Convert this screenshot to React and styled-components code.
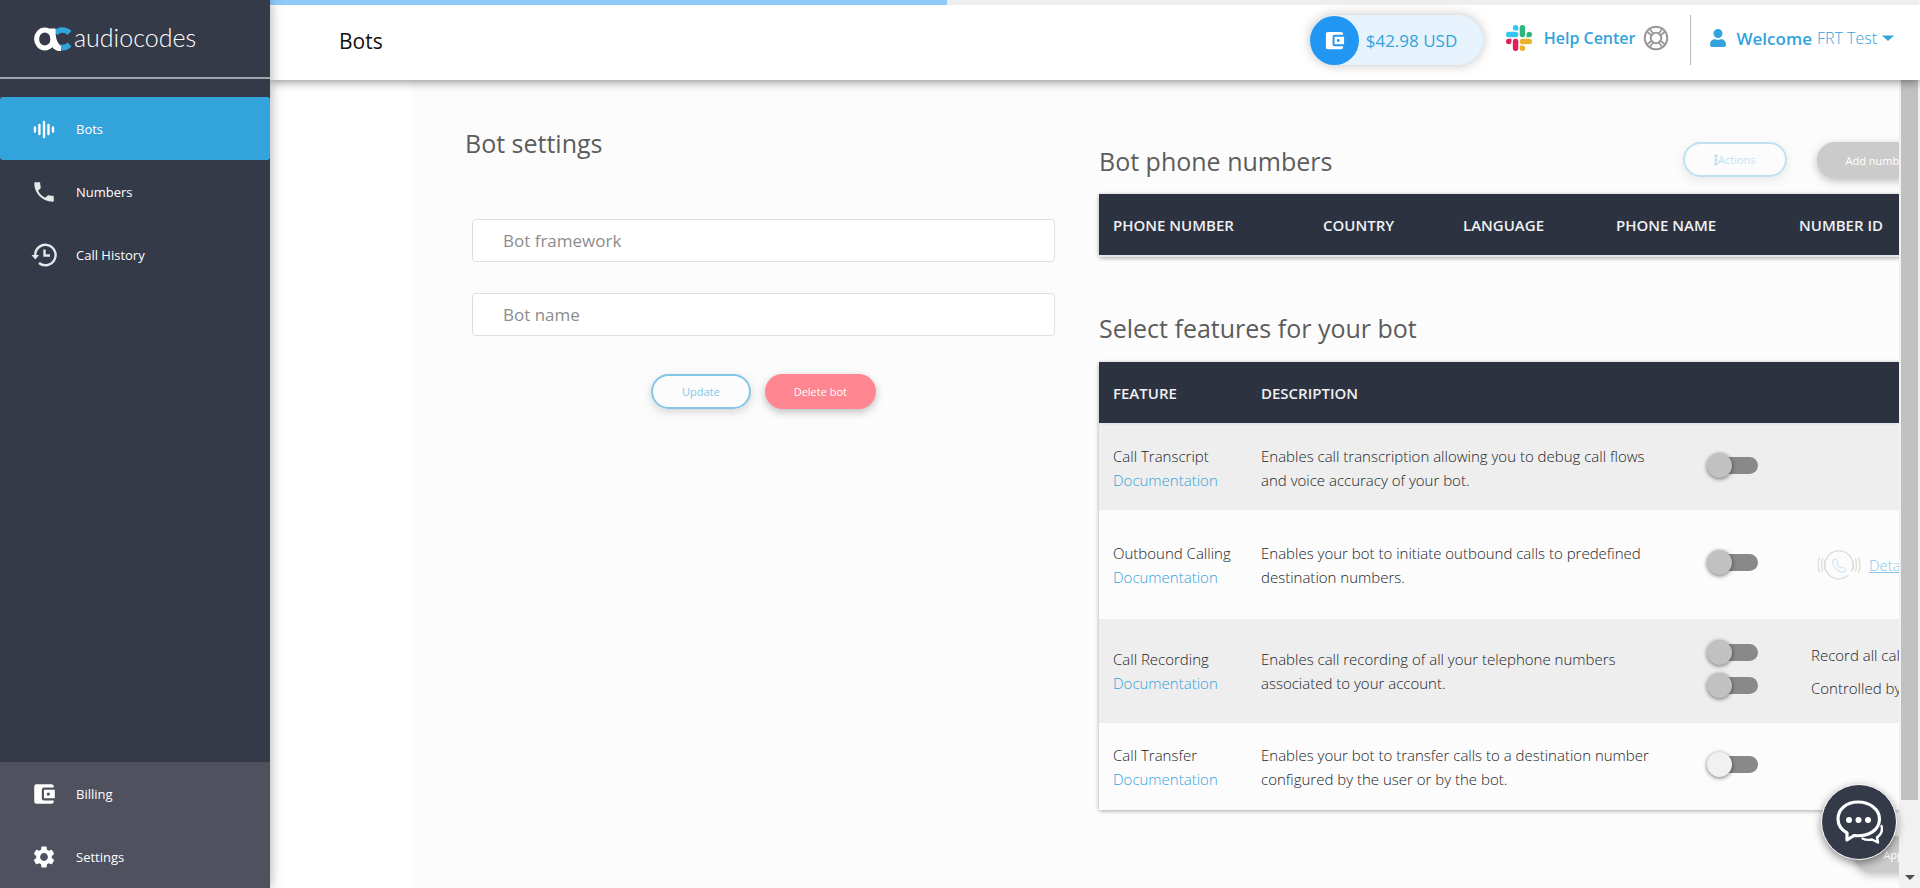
import React from "react";
import styled, { createGlobalStyle, css } from "styled-components";
import { MdAccountBalanceWallet, MdPhone, MdSettings } from "react-icons/md";
import { FaUser } from "react-icons/fa";

const GlobalStyle = createGlobalStyle`
  * { box-sizing: border-box; }
  body {
    margin: 0;
    overflow: hidden;
    font-family: "Open Sans", "Noto Sans", sans-serif;
    color: #212529;
    background: #fff;
  }
  a { text-decoration: none; }
  h1, h2 { margin: 0; }
  button, input { font-family: inherit; }
`;

const Shell = styled.div`
  display: flex;
  height: 100vh;
`;

/* Sidebar */

const Sidebar = styled.aside`
  display: flex;
  flex-direction: column;
  flex: 0 0 270px;
  background: #353a48;
  box-shadow: 0 0 12px rgba(0, 0, 0, 0.35);
  z-index: 3;
`;

const Brand = styled.a`
  display: flex;
  align-items: center;
  gap: 2px;
  height: 79px;
  padding-left: 34px;
  color: #fff;
  border-bottom: 2px solid #a3a5ad;
`;

const BrandName = styled.span`
  font-family: Lato, sans-serif;
  font-weight: 300;
  font-size: 25px;
  line-height: 30px;
  padding-bottom: 4px;
`;

const Nav = styled.nav`
  display: flex;
  flex-direction: column;
  padding-top: 18px;
`;

const BottomNav = styled(Nav)`
  margin-top: auto;
  padding-top: 0;
  background: #4f525e;
`;

const NavItem = styled.a`
  display: flex;
  align-items: center;
  gap: 19px;
  height: 63px;
  padding-left: 31px;
  border-radius: 3px;
  font-size: 13px;
  color: #fff;
  background: ${(p) => (p.$active ? "#33a3dc" : "transparent")};

  svg {
    width: 26px;
    height: 26px;
    opacity: ${(p) => (p.$dim ? 0.88 : 1)};
  }
`;

/* Header */

const Page = styled.div`
  display: flex;
  flex-direction: column;
  flex: 1;
  min-width: 0;
`;

const Header = styled.header`
  flex: none;
  background: #fff;
  box-shadow: 0 1px 10px rgba(0, 0, 0, 0.5);
  z-index: 2;
`;

const Progress = styled.div`
  height: 5px;
  background: #eee;
  border-radius: 0 3px 3px 0;

  &::before {
    content: "";
    display: block;
    width: 41%;
    height: 5px;
    background: #90caf9;
  }
`;

const HeaderRow = styled.div`
  display: flex;
  align-items: center;
  height: 75px;
  padding: 0 26px 9px 69px;
`;

const PageTitle = styled.h1`
  flex: 1;
  padding-top: 5px;
  font-size: 21px;
  font-weight: 400;
  color: #111;
`;

const Balance = styled.a`
  display: flex;
  align-items: center;
  gap: 7px;
  width: 173px;
  height: 50px;
  margin-right: 23px;
  margin-top: 4px;
  border-radius: 25px;
  font-size: 17px;
  color: #33a3dc;
  background: #e6f3fd;
  box-shadow: 0 0 12px rgba(0, 0, 0, 0.25);
`;

const BalanceIcon = styled.span`
  display: flex;
  align-items: center;
  justify-content: center;
  width: 49px;
  height: 49px;
  border-radius: 50%;
  color: #fff;
  background: #2196f3;
`;

const HeaderLink = styled.a`
  display: flex;
  align-items: center;
  gap: ${(p) => p.$gap}px;
  font-size: 16px;
  color: #33a3dc;

  strong {
    padding-left: 4px;
    font-size: ${(p) => p.$strongSize}px;
    font-weight: 600;
  }
  span { font-weight: 300; }
`;

const HeaderRule = styled.div`
  width: 1px;
  height: 50px;
  margin: 4px 18px 0 21px;
  background: #bbb;
`;

/* Workspace */

const Body = styled.div`
  display: flex;
  flex: 1;
  min-height: 0;
`;

const Workspace = styled.main`
  display: grid;
  grid-template-columns: minmax(0, 59fr) minmax(0, 80fr);
  column-gap: 44px;
  flex: 1;
  min-width: 0;
  margin-left: 141px;
  padding-left: 54px;
  overflow: hidden;
  background: #fcfcfc;
`;

const ScrollTrack = styled.div`
  display: flex;
  flex-direction: column;
  justify-content: space-between;
  align-items: center;
  flex: 0 0 21px;
  padding-bottom: 8px;
  background: #f1f1f1;

  &::before {
    content: "";
    width: 17px;
    height: 90%;
    background: #c1c1c1;
  }
  &::after {
    content: "";
    border: 5px solid transparent;
    border-top-color: #505050;
    border-bottom: 0;
  }
`;

const SectionTitle = styled.h2`
  font-size: 25px;
  line-height: 34px;
  font-weight: 400;
  color: #5c5c5c;
`;

const SettingsForm = styled.form`
  padding-top: 46px;
`;

const Fields = styled.div`
  display: flex;
  flex-direction: column;
  gap: 31px;
  padding: 59px 0 38px 7px;
`;

const TextField = styled.input`
  width: 100%;
  height: 43px;
  padding: 0 30px;
  border: 1px solid #dedede;
  border-radius: 4px;
  font-size: 17px;
  color: #444;
  background: #fff;

  &::placeholder { color: #8c8c8c; opacity: 1; }
`;

const ButtonRow = styled.div`
  display: flex;
  justify-content: center;
  gap: 14px;
  padding-left: 7px;
`;

const outline = css`
  border: 2px solid #33a3dc;
  color: #33a3dc;
  background: transparent;
`;

const Button = styled.button`
  display: inline-flex;
  align-items: center;
  flex: none;
  height: ${(p) => p.$height || 35}px;
  padding: 0 29px;
  border: 0;
  border-radius: 19px;
  font-size: 11px;
  color: #fff;
  background: ${(p) => p.$fill};
  opacity: ${(p) => p.$opacity || 1};
  box-shadow: 0 3px 8px rgba(0, 0, 0, 0.25);
  ${(p) => p.$outline && outline}
`;

const BotDetails = styled.div`
  padding-top: 62px;
`;

const TitleRow = styled.div`
  display: flex;
  align-items: flex-start;
  gap: 30px;
  width: 880px;
  padding-bottom: 16px;

  h2 { flex: 0 0 554px; padding-top: 2px; }
`;

const Table = styled.table`
  width: 900px;
  table-layout: fixed;
  border-spacing: 0;
  border-radius: 3px;
  box-shadow: 0 1px 4px rgba(0, 0, 0, 0.35);
  font-size: 15px;
  text-align: left;
`;

const HeadCell = styled.th`
  width: ${(p) => (p.$width ? `${p.$width}px` : "auto")};
  height: 63px;
  padding: 0 0 0 14px;
  border-bottom: 2px solid #e4e7ec;
  font-weight: 600;
  color: #eef0f3;
  background: #2d3240;
`;

const FeatureRow = styled.tr`
  height: ${(p) => p.$height}px;
  background: ${(p) => (p.$shaded ? "#eee" : "#fcfcfc")};

  & + & td { border-top: 1px solid #dfe1e3; }
`;

const Cell = styled.td`
  padding: 0 ${(p) => (p.$text ? 36 : 0)}px ${(p) => (p.$raised ? 4 : 0)}px 14px;
  font-weight: 300;
  line-height: 24px;
  white-space: ${(p) => (p.$nowrap ? "nowrap" : "normal")};
`;

const DocLink = styled.a`
  display: block;
  color: #33a3dc;
`;

const Stack = styled.div`
  display: flex;
  flex-direction: column;
  gap: ${(p) => p.$gap}px;
`;

const Switch = styled.input`
  appearance: none;
  display: flex;
  align-items: center;
  width: 48px;
  height: 17px;
  margin: 0 0 0 3px;
  border-radius: 9px;
  background: #898989;

  &::before {
    content: "";
    flex: none;
    width: 25px;
    height: 25px;
    margin-left: -3px;
    border-radius: 50%;
    background: ${(p) => (p.disabled ? "#c1c1c1" : "#f1f1f1")};
    box-shadow: 0 1px 4px rgba(0, 0, 0, 0.55);
  }
`;

const Details = styled.div`
  display: flex;
  align-items: center;
  gap: 8px;
  padding-left: 6px;

  a { color: #33a3dc; opacity: 0.6; text-decoration: underline; }
`;

const FeaturesTitle = styled(SectionTitle)`
  padding: 54px 0 17px;
`;

const ApplyRow = styled.div`
  display: flex;
  justify-content: flex-end;
  width: 842px;
  padding-top: 26px;
`;

const ChatButton = styled.button`
  position: fixed;
  right: 23px;
  bottom: 28px;
  z-index: 4;
  display: flex;
  align-items: center;
  justify-content: center;
  width: 76px;
  height: 76px;
  padding: 0;
  border: 1px solid #fff;
  border-radius: 50%;
  background: #353a48;
  box-shadow: 0 3px 8px rgba(0, 0, 0, 0.45);
`;

/* Drawings */

const BrandMark = () => (
  <svg width="38" height="24" viewBox="0 0 38 24" fill="none" aria-hidden="true">
    <path d="M21.500 6.500C24 2.500 31 1.500 35.500 6" stroke="#33a3dc" strokeWidth="5.500" />
    <path d="M25.500 20Q31 22 35.500 17.500" stroke="#33a3dc" strokeWidth="5.500" />
    <ellipse cx="10.800" cy="12" rx="8.200" ry="9" stroke="#fff" strokeWidth="5" />
    <path d="M16 1.500h5.500c0 9 1 14 5.500 17.500v5c-5 0-8-2-10-6z" fill="#fff" />
  </svg>
);

const WaveIcon = () => (
  <svg viewBox="0 0 26 26" stroke="#fff" strokeWidth="2.400" strokeLinecap="round" aria-hidden="true">
    <path d="M4 11.500v4M8.400 9v9M13 6v15M17.500 9v9M22 11.500v4" />
  </svg>
);

const HistoryIcon = () => (
  <svg viewBox="0 0 26 26" fill="none" stroke="#fff" strokeWidth="2.400" aria-hidden="true">
    <path d="M4.200 13A10.200 10.200 0 1 1 8 21" />
    <path d="M0.500 13h7.500l-3.700 4.500z" fill="#fff" stroke="none" />
    <path d="M13.500 7.500v6h5.500" />
  </svg>
);

const SlackIcon = () => (
  <svg width="26" height="26" viewBox="0 0 122.800 122.800" aria-hidden="true">
    <path d="M25.800 77.600a12.900 12.900 0 1 1-12.900-12.900h12.900zM32.300 77.600a12.900 12.900 0 0 1 25.800 0v32.300a12.900 12.900 0 0 1-25.800 0z" fill="#e01e5a" />
    <path d="M45.200 25.800a12.900 12.900 0 1 1 12.900-12.900v12.900zM45.200 32.300a12.900 12.900 0 0 1 0 25.800H12.900a12.900 12.900 0 0 1 0-25.800z" fill="#36c5f0" />
    <path d="M97 45.200a12.900 12.900 0 1 1 12.900 12.900H97zM90.500 45.200a12.900 12.900 0 0 1-25.800 0V12.900a12.900 12.900 0 0 1 25.800 0z" fill="#2eb67d" />
    <path d="M77.600 97a12.900 12.900 0 1 1-12.900 12.900V97zM77.600 90.500a12.900 12.900 0 0 1 0-25.800h32.300a12.900 12.900 0 0 1 0 25.800z" fill="#ecb22e" />
  </svg>
);

const LifeRingIcon = () => (
  <svg width="26" height="26" viewBox="0 0 26 26" fill="none" stroke="#999" strokeWidth="2" aria-hidden="true">
    <circle cx="13" cy="13" r="11.300" />
    <circle cx="13" cy="13" r="5.200" />
    <path d="M3.800 6.500l5 4M6.500 3.800l4 5M22.200 6.500l-5 4M19.500 3.800l-4 5M3.800 19.500l5-4M6.500 22.200l4-5M22.200 19.500l-5-4M19.500 22.200l-4-5" strokeWidth="1.800" />
  </svg>
);

const CaretIcon = () => (
  <svg width="12" height="7" viewBox="0 0 12 7" aria-hidden="true">
    <path d="M0 0.500h12l-6 5.500z" fill="#33a3dc" />
  </svg>
);

const DotsIcon = () => (
  <svg width="4" height="12" viewBox="0 0 4 12" fill="#33a3dc" aria-hidden="true">
    <circle cx="2" cy="2" r="1.700" />
    <circle cx="2" cy="6" r="1.700" />
    <circle cx="2" cy="10" r="1.700" />
  </svg>
);

const RingingIcon = () => (
  <svg width="44" height="30" viewBox="0 0 44 30" fill="none" stroke="#ddd" strokeWidth="1.400" strokeLinecap="round" aria-hidden="true">
    <path d="M31 25.500A14 14 0 1 1 34.500 21" />
    <path d="M2.500 8q-3 7 0 14M5.500 9q-2 6 0 12M41.500 8q3 7 0 14M38.500 9q2 6 0 12M35.800 10.500q1.500 4.500 0 9M8.200 10.500q-1.500 4.500 0 9" />
    <path d="M17 9.500c-3 2-1 6 2 9s7 5 9.500 2.500c1.500-1.500-2.500-4.500-4-3.500s-1.500 0-3-1.500-2-2-1-3.200-1.500-4.600-3.500-3.300z" stroke="#d3eaf9" />
  </svg>
);

const ChatIcon = () => (
  <svg width="48" height="46" viewBox="0 0 48 46" fill="none" stroke="#fff" strokeWidth="3.200" strokeLinejoin="round" strokeLinecap="round" aria-hidden="true">
    <path d="M23 3C11 3 3 10.500 3 20c0 6 3 10.500 9 14v7l7-4.500c14 1.500 25.500-5 25.500-16.500C44.500 10.500 35 3 23 3z" />
    <path d="M46.500 27c1.500 5-.5 8.500-4.500 11.500l1 5-6-3c-4 .8-7 .3-9.500-1" strokeWidth="2.400" />
    <g fill="#fff" stroke="none">
      <circle cx="14" cy="21" r="3" />
      <circle cx="23.500" cy="21" r="3" />
      <circle cx="33" cy="21" r="3" />
    </g>
  </svg>
);

const phoneColumns = [
  ["Phone number", 210],
  ["Country", 140],
  ["Language", 153],
  ["Phone name", 183],
  ["Number ID"],
];

const features = [
  {
    name: "Call Transcript",
    text: "Enables call transcription allowing you to debug call flows and voice accuracy of your bot.",
    height: 85,
    locked: true,
    switches: ["Call Transcript"],
  },
  {
    name: "Outbound Calling",
    text: "Enables your bot to initiate outbound calls to predefined destination numbers.",
    height: 109,
    locked: true,
    switches: ["Outbound Calling"],
    extra: (
      <Details>
        <RingingIcon />
        <a href="#details">Details</a>
      </Details>
    ),
  },
  {
    name: "Call Recording",
    text: "Enables call recording of all your telephone numbers associated to your account.",
    height: 104,
    locked: true,
    switches: ["Record all calls", "Controlled by bot"],
    extra: (
      <Stack $gap={9}>
        <span>Record all calls</span>
        <span>Controlled by bot</span>
      </Stack>
    ),
  },
  {
    name: "Call Transfer",
    text: "Enables your bot to transfer calls to a destination number configured by the user or by the bot.",
    height: 87,
    switches: ["Call Transfer"],
  },
];

export default function App() {
  return (
    <Shell>
      <GlobalStyle />
      <Sidebar>
        <Brand href="#home">
          <BrandMark />
          <BrandName>audiocodes</BrandName>
        </Brand>
        <Nav>
          <NavItem href="#bots" $active><WaveIcon />Bots</NavItem>
          <NavItem href="#numbers" $dim><MdPhone />Numbers</NavItem>
          <NavItem href="#history" $dim><HistoryIcon />Call History</NavItem>
        </Nav>
        <BottomNav>
          <NavItem href="#billing"><MdAccountBalanceWallet />Billing</NavItem>
          <NavItem href="#settings"><MdSettings />Settings</NavItem>
        </BottomNav>
      </Sidebar>

      <Page>
        <Header>
          <Progress />
          <HeaderRow>
            <PageTitle>Bots</PageTitle>
            <Balance href="#balance">
              <BalanceIcon><MdAccountBalanceWallet size={23} /></BalanceIcon>
              $42.98 USD
            </Balance>
            <HeaderLink href="#help" $gap={8} $strongSize={16}>
              <SlackIcon />
              <strong>Help Center</strong>
              <LifeRingIcon />
            </HeaderLink>
            <HeaderRule />
            <HeaderLink href="#account" $gap={5} $strongSize={17}>
              <FaUser size={18} />
              <strong>Welcome</strong>
              <span>FRT Test</span>
              <CaretIcon />
            </HeaderLink>
          </HeaderRow>
        </Header>

        <Body>
          <Workspace>
            <SettingsForm>
              <SectionTitle>Bot settings</SectionTitle>
              <Fields>
                <TextField aria-label="Bot framework" placeholder="Bot framework" />
                <TextField aria-label="Bot name" placeholder="Bot name" />
              </Fields>
              <ButtonRow>
                <Button type="button" $outline $opacity={0.6}>Update</Button>
                <Button type="button" $fill="#ff8590">Delete bot</Button>
              </ButtonRow>
            </SettingsForm>

            <BotDetails>
              <TitleRow>
                <SectionTitle>Bot phone numbers</SectionTitle>
                <Button type="button" $outline $opacity={0.3}><DotsIcon />Actions</Button>
                <Button type="button" $fill="#cbcbcb" $height={36}>Add number</Button>
              </TitleRow>
              <Table>
                <thead>
                  <tr>
                    {phoneColumns.map(([label, width]) => (
                      <HeadCell key={label} $width={width}>{label.toUpperCase()}</HeadCell>
                    ))}
                  </tr>
                </thead>
              </Table>

              <FeaturesTitle>Select features for your bot</FeaturesTitle>
              <Table>
                <thead>
                  <tr>
                    <HeadCell $width={148}>FEATURE</HeadCell>
                    <HeadCell $width={446}>DESCRIPTION</HeadCell>
                    <HeadCell $width={104} />
                    <HeadCell />
                  </tr>
                </thead>
                <tbody>
                  {features.map((f, i) => (
                    <FeatureRow key={f.name} $height={f.height} $shaded={i % 2 === 0}>
                      <Cell $nowrap>
                        {f.name}
                        <DocLink href="#documentation">Documentation</DocLink>
                      </Cell>
                      <Cell $text>{f.text}</Cell>
                      <Cell $raised>
                        <Stack $gap={16}>
                          {f.switches.map((label) => (
                            <Switch key={label} type="checkbox" role="switch" aria-label={label} disabled={f.locked} />
                          ))}
                        </Stack>
                      </Cell>
                      <Cell $nowrap>{f.extra}</Cell>
                    </FeatureRow>
                  ))}
                </tbody>
              </Table>
              <ApplyRow>
                <Button type="button" $fill="#cbcbcb" $height={36}>Apply</Button>
              </ApplyRow>
            </BotDetails>
          </Workspace>
          <ScrollTrack />
        </Body>
      </Page>

      <ChatButton type="button" aria-label="Open chat"><ChatIcon /></ChatButton>
    </Shell>
  );
}
